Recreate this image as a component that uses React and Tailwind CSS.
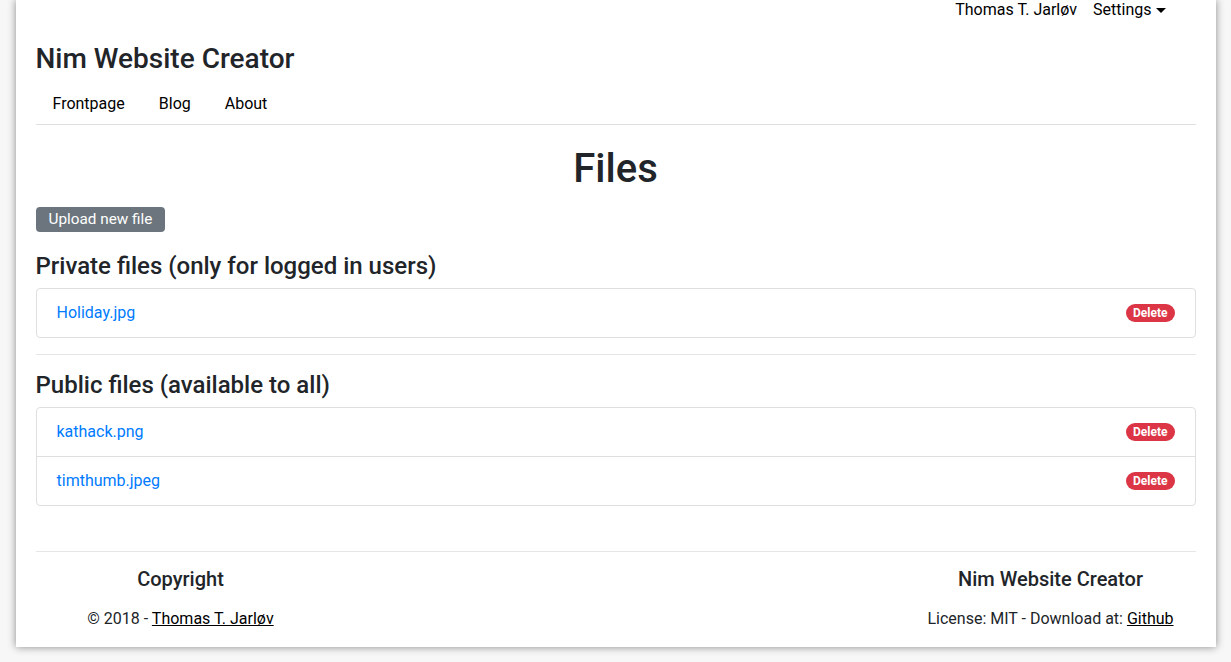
const files = {
  private: ["Holiday.jpg"],
  public: ["kathack.png", "timthumb.jpeg"],
};

function FileList({ items }) {
  return (
    <ul className="rounded border border-[#dfdfdf]">
      {items.map((name, i) => (
        <li
          key={name}
          className={`flex items-center justify-between px-5 py-3 leading-6 ${i > 0 ? "border-t border-[#dfdfdf]" : ""}`}
        >
          <a href="#" className="text-[#007bff]">
            {name}
          </a>
          <span className="rounded-full bg-[#dc3545] px-[7px] py-[3px] text-[12px] font-bold leading-3 text-white">
            Delete
          </span>
        </li>
      ))}
    </ul>
  );
}

export default function App() {
  return (
    <div className="min-h-screen bg-[#f7f7f7] font-['Roboto',sans-serif] text-[#212529]">
      <div className="mx-auto w-[1200px] bg-white px-5 pb-[16px] shadow-[0_0_8px_rgba(0,0,0,0.45)]">
        <div className="flex h-[20px] items-center justify-end gap-4 pr-[30px] text-base text-black">
          <span>Thomas T. Jarløv</span>
          <span className="flex items-center">
            Settings
            <span className="ml-[4px] mt-[1px] h-0 w-0 border-x-[5px] border-t-[5px] border-x-transparent border-t-black" />
          </span>
        </div>

        <h3 className="mt-[22px] text-[28px] font-medium leading-[1.2]">Nim Website Creator</h3>

        <nav className="mt-2 flex border-b border-[#dfdfdf] text-base text-black">
          <a href="#" className="px-[17px] py-2 leading-6">Frontpage</a>
          <a href="#" className="px-[17px] py-2 leading-6">Blog</a>
          <a href="#" className="px-[17px] py-2 leading-6">About</a>
        </nav>

        <h1 className="mt-5 text-center text-[40px] font-medium leading-[1.2]">Files</h1>

        <button className="mt-[14px] flex h-[25px] items-center rounded bg-[#6c757d] px-[13px] text-[15.3px] text-white">
          Upload new file
        </button>

        <h4 className="mt-[20px] text-[24px] font-medium leading-[1.2]">Private files (only for logged in users)</h4>
        <div className="mt-[8px]">
          <FileList items={files.private} />
        </div>

        <hr className="mt-4 border-[#e5e5e5]" />

        <h4 className="mt-[16px] text-[24px] font-medium leading-[1.2]">Public files (available to all)</h4>
        <div className="mt-[7px]">
          <FileList items={files.public} />
        </div>

        <footer className="mt-[45px] border-t border-[#e5e5e5] pt-[15px]">
          <div className="grid grid-cols-4">
            <div className="text-center">
              <h5 className="text-[20px] font-medium leading-[1.2]">Copyright</h5>
              <p className="mt-[16px] leading-6">
                © 2018 - <a href="#" className="text-black underline">Thomas T. Jarløv</a>
              </p>
            </div>
            <div />
            <div />
            <div className="text-center">
              <h5 className="text-[20px] font-medium leading-[1.2]">Nim Website Creator</h5>
              <p className="mt-[16px] leading-6">
                License: MIT - Download at: <a href="#" className="text-black underline">Github</a>
              </p>
            </div>
          </div>
        </footer>
      </div>
    </div>
  );
}
